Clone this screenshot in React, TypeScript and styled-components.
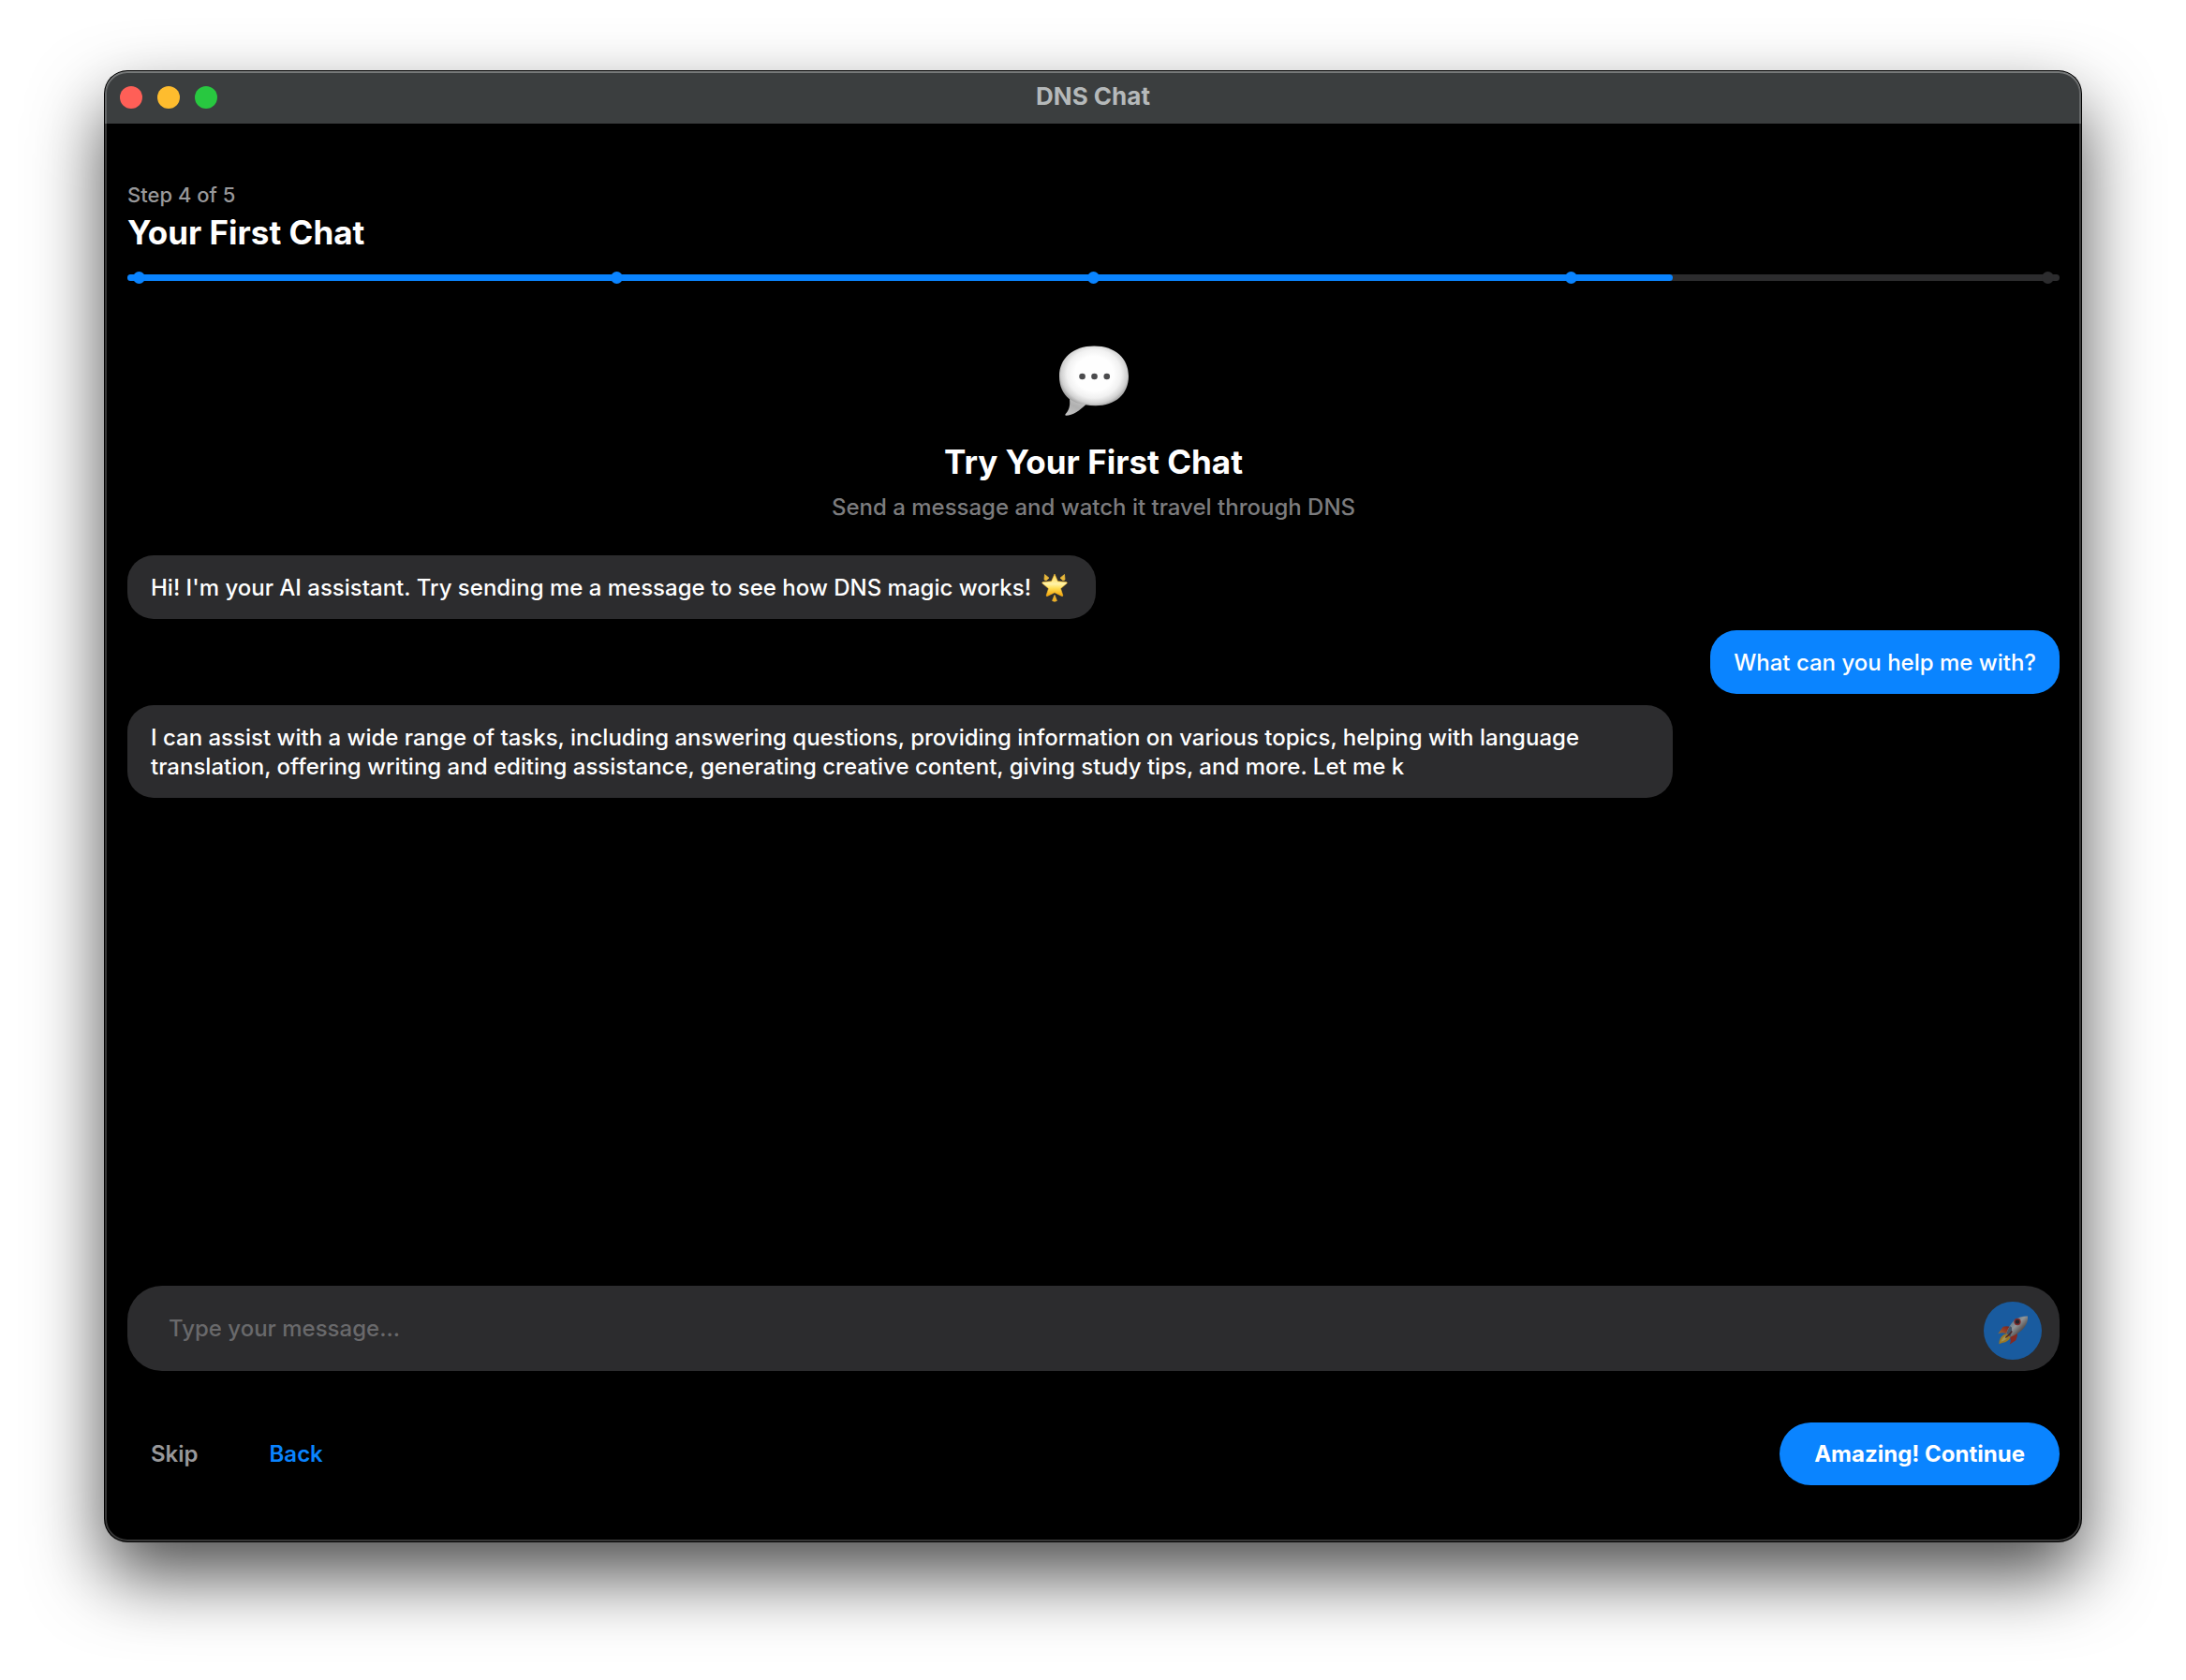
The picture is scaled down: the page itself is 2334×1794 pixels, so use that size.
import React from "react";
import styled, { createGlobalStyle } from "styled-components";

const GlobalStyle = createGlobalStyle`
  *, *::before, *::after { box-sizing: border-box; }
  body {
    margin: 0;
    background: #fff;
    font-family: Inter, "Liberation Sans", sans-serif;
    -webkit-font-smoothing: antialiased;
  }
  h1, h2, p { margin: 0; }
  button, input { font-family: inherit; border: 0; }
`;

const Desktop = styled.div`
  display: flex;
  min-height: 100vh;
  padding: 76px 112px 148px;
`;

const Window = styled.div`
  position: relative;
  flex: 1;
  display: flex;
  flex-direction: column;
  overflow: hidden;
  border-radius: 24px;
  background: #000;
  box-shadow: 0 0 0 1px #000, 0 36px 78px rgba(0, 0, 0, 0.7);

  &::after {
    content: "";
    position: absolute;
    inset: 0;
    border-radius: inherit;
    box-shadow: inset 0 0 0 2px rgba(255, 255, 255, 0.21),
      inset 0 2px 0 rgba(255, 255, 255, 0.12);
    pointer-events: none;
  }
`;

const TitleBar = styled.header`
  display: grid;
  grid-template-columns: 1fr auto 1fr;
  align-items: center;
  height: 56px;
  padding: 0 16px;
  background: #3b3e3f;
`;

const Lights = styled.div`
  display: flex;
  gap: 16px;
`;

const Light = styled.button<{ $color: string }>`
  width: 24px;
  height: 24px;
  padding: 0;
  border-radius: 50%;
  background: ${(p) => p.$color};
`;

const WindowTitle = styled.div`
  color: #b5b9ba;
  font-size: 26px;
  font-weight: 700;
  line-height: 32px;
  padding-bottom: 2px;
`;

const Main = styled.main`
  flex: 1;
  display: flex;
  flex-direction: column;
  padding: 63px 23px 60px 24px;
`;

const StepLabel = styled.p`
  color: #98989a;
  font-size: 22px;
  font-weight: 500;
  line-height: 26px;
`;

const Heading = styled.h1`
  margin-top: 5px;
  color: #fff;
  font-size: 35px;
  font-weight: 700;
  line-height: 44px;
`;

const Track = styled.div`
  position: relative;
  height: 7px;
  margin-top: 23px;
  border-radius: 4px;
  background: #2c2c2e;
`;

const Fill = styled.div`
  height: 100%;
  border-radius: 4px;
  background: #0a84ff;
`;

const Dots = styled.div`
  position: absolute;
  inset: -3px 6px;
  display: flex;
  justify-content: space-between;
`;

const Dot = styled.span<{ $done: boolean }>`
  width: 13px;
  height: 13px;
  border-radius: 50%;
  background: ${(p) => (p.$done ? "#0a84ff" : "#2c2c2e")};
`;

const Hero = styled.section`
  display: flex;
  flex-direction: column;
  align-items: center;
  margin-top: 69px;
  text-align: center;
`;

const HeroTitle = styled.h2`
  margin-top: 26px;
  color: #fff;
  font-size: 35px;
  font-weight: 700;
  line-height: 44px;
`;

const HeroText = styled.p`
  margin-top: 11px;
  color: #7c7c7e;
  font-size: 24px;
  font-weight: 500;
  line-height: 31px;
`;

const Chat = styled.section`
  flex: 1;
  display: flex;
  flex-direction: column;
  gap: 12px;
  margin-top: 36px;
`;

const Bubble = styled.p<{ $mine?: boolean }>`
  align-self: ${(p) => (p.$mine ? "flex-end" : "flex-start")};
  max-width: 80%;
  padding: 19px 25px 18px;
  border-radius: 28px;
  background: ${(p) => (p.$mine ? "#0a84ff" : "#2c2c2e")};
  color: #fff;
  font-size: 24px;
  font-weight: 500;
  line-height: 31px;
`;

const StarIcon = styled.svg`
  display: inline-block;
  width: 32px;
  height: 31px;
  margin: 0 3px;
  vertical-align: top;
`;

const Composer = styled.form`
  display: flex;
  align-items: center;
  height: 91px;
  padding: 0 19px 0 44px;
  border-radius: 37px;
  background: #2c2c2e;
`;

const MessageInput = styled.input`
  flex: 1;
  min-width: 0;
  padding: 0;
  outline: 0;
  background: transparent;
  color: #fff;
  font-size: 24px;
  font-weight: 500;
  line-height: 31px;

  &::placeholder {
    color: #69696b;
    opacity: 1;
  }
`;

const SendButton = styled.button`
  display: grid;
  place-items: center;
  width: 62px;
  height: 62px;
  margin-top: 4px;
  padding: 0;
  border-radius: 50%;
  background: #0a84ff;
  opacity: 0.54;
`;

const Footer = styled.footer`
  display: flex;
  align-items: center;
  gap: 26px;
  margin-top: 55px;
`;

const TextButton = styled.button<{ $color: string }>`
  padding: 18px 25px;
  background: transparent;
  color: ${(p) => p.$color};
  font-size: 24px;
  font-weight: 600;
  line-height: 31px;
`;

const PrimaryButton = styled.button`
  margin-left: auto;
  padding: 18px 37px;
  border-radius: 34px;
  background: #0a84ff;
  color: #fff;
  font-size: 24px;
  font-weight: 700;
  line-height: 31px;
`;

const SpeechBalloon = () => (
  <svg width="74" height="76" viewBox="449 86 223 228" aria-hidden="true">
    <defs>
      <radialGradient
        id="balloon"
        gradientUnits="userSpaceOnUse"
        cx="0"
        cy="0"
        r="1"
        gradientTransform="translate(561 176) scale(124 112)"
      >
        <stop offset="0.5" stopColor="#fefefe" />
        <stop offset="0.7" stopColor="#f1f1f1" />
        <stop offset="0.85" stopColor="#d2d2d2" />
        <stop offset="1" stopColor="#8e8e8e" />
      </radialGradient>
      <linearGradient id="tail" x1="0.2" y1="1" x2="0.7" y2="0">
        <stop offset="0" stopColor="#c4c4c4" />
        <stop offset="0.5" stopColor="#b0b0b0" />
        <stop offset="1" stopColor="#cccccc" />
      </linearGradient>
    </defs>
    <path
      d="M481 250C485 273 483 291 470 305C467 308 467 311 471 311C492 311 515 295 536 274Z"
      fill="url(#tail)"
    />
    <path
      d="M561 87C630 87 672 127 672 184C672 242 629 279 566 279C554 279 543 278 533 276C512 273 495 266 481 257C460 240 449 215 449 184C449 127 493 87 561 87Z"
      fill="url(#balloon)"
    />
    <g fill="#4b4b4d">
      <circle cx="523" cy="185" r="10" />
      <circle cx="562" cy="185" r="10" />
      <circle cx="602" cy="185" r="10" />
    </g>
  </svg>
);

const GlowingStar = () => (
  <StarIcon viewBox="0 0 32 31" role="img" aria-label="glowing star">
    <defs>
      <linearGradient id="star" x1="0" y1="0" x2="0" y2="1">
        <stop offset="0" stopColor="#fdd24b" />
        <stop offset="0.45" stopColor="#fff3a8" />
        <stop offset="0.65" stopColor="#fedd55" />
        <stop offset="1" stopColor="#f6a000" />
      </linearGradient>
    </defs>
    <g fill="#e9b83a" stroke="#e9b83a" strokeWidth="0.8" strokeLinejoin="round">
      <path d="M5.5 1.5L10 5.2L7 7.8L5 7Z" />
      <path d="M26.5 1.5L22 5.2L25 7.8L27 7Z" />
      <path d="M16 23.5L18.4 29.5Q16 31 13.6 29.5Z" fill="#f2ab1e" />
    </g>
    <path
      d="M16 1L19.4 8.7L28.500 9.500Q30 10 29 11L22.500 16.500L24.800 23.800Q24.800 25 23.600 24.500L16 20.800L8.400 24.500Q7.200 25 7.200 23.800L9.500 16.500L3 11Q2 10 3.500 9.500L12.600 8.700Z"
      fill="url(#star)"
      stroke="#f7ba2c"
      strokeWidth="0.6"
      strokeLinejoin="round"
    />
  </StarIcon>
);

const Rocket = () => (
  <svg width="32" height="31" viewBox="158 164 96 92" aria-hidden="true">
    <defs>
      <linearGradient id="hull" x1="0.2" y1="0.2" x2="0.75" y2="0.75">
        <stop offset="0" stopColor="#7fb4d8" />
        <stop offset="0.45" stopColor="#e4edf2" />
        <stop offset="1" stopColor="#5c4c48" />
      </linearGradient>
      <linearGradient id="fin" x1="0" y1="1" x2="1" y2="0">
        <stop offset="0" stopColor="#ffb02e" />
        <stop offset="0.5" stopColor="#ee4b1d" />
        <stop offset="1" stopColor="#b01a12" />
      </linearGradient>
    </defs>
    <path d="M159 221L175 199Q185 195 198 199L186 221Q172 216 159 221Z" fill="url(#fin)" />
    <path d="M196 256Q202 245 197 232L221 217Q222 232 216 242Z" fill="#d02a18" />
    <path d="M162 254Q162 234 177 224L193 219L200 228Q196 243 182 248Q172 250 162 254Z" fill="#f6b51e" />
    <path d="M168 247Q170 236 181 229L190 230Q187 241 168 247Z" fill="#ffe873" />
    <path d="M254 165Q256 187 238 207Q221 224 198 232L186 220Q193 196 211 178Q230 164 254 165Z" fill="url(#hull)" />
    <path d="M186 220Q190 208 197 197Q210 198 198 232Z" fill="#557a99" />
    <path d="M183 234Q194 226 204 213" stroke="#6b1c18" strokeWidth="4" fill="none" />
    <circle cx="221" cy="183" r="11" fill="#c92a28" />
    <circle cx="221" cy="183" r="7" fill="#1c1c26" />
  </svg>
);

const steps = ["Welcome", "How It Works", "Setup", "First Chat", "Done"];
const current = 4;

export default function App() {
  return (
    <>
      <GlobalStyle />
      <Desktop>
        <Window>
          <TitleBar>
            <Lights>
              <Light $color="#ff5f57" aria-label="Close" />
              <Light $color="#febc2e" aria-label="Minimize" />
              <Light $color="#28c840" aria-label="Zoom" />
            </Lights>
            <WindowTitle>DNS Chat</WindowTitle>
          </TitleBar>
          <Main>
            <StepLabel>
              Step {current} of {steps.length}
            </StepLabel>
            <Heading>Your First Chat</Heading>
            <Track>
              <Fill style={{ width: `${(current / steps.length) * 100}%` }} />
              <Dots>
                {steps.map((step, i) => (
                  <Dot key={step} $done={i < current} />
                ))}
              </Dots>
            </Track>
            <Hero>
              <SpeechBalloon />
              <HeroTitle>Try Your First Chat</HeroTitle>
              <HeroText>Send a message and watch it travel through DNS</HeroText>
            </Hero>
            <Chat>
              <Bubble>
                Hi! I'm your AI assistant. Try sending me a message to see how DNS magic works! <GlowingStar />
              </Bubble>
              <Bubble $mine>What can you help me with?</Bubble>
              <Bubble>
                I can assist with a wide range of tasks, including answering questions, providing information on
                various topics, helping with language translation, offering writing and editing assistance,
                generating creative content, giving study tips, and more. Let me k
              </Bubble>
            </Chat>
            <Composer onSubmit={(e) => e.preventDefault()}>
              <MessageInput aria-label="Message" placeholder="Type your message..." />
              <SendButton type="submit" aria-label="Send">
                <Rocket />
              </SendButton>
            </Composer>
            <Footer>
              <TextButton $color="#98989a">Skip</TextButton>
              <TextButton $color="#0a84ff">Back</TextButton>
              <PrimaryButton>Amazing! Continue</PrimaryButton>
            </Footer>
          </Main>
        </Window>
      </Desktop>
    </>
  );
}
